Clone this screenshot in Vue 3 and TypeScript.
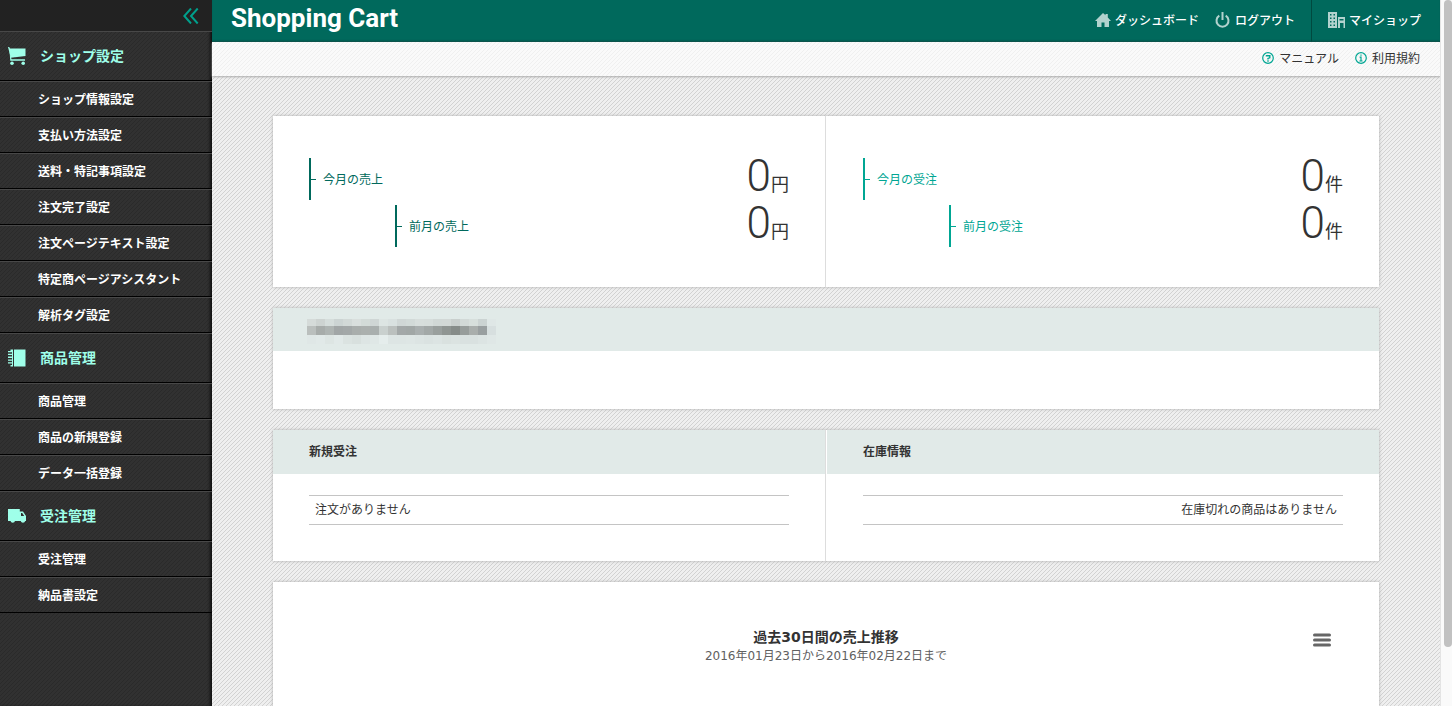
<script setup lang="ts">
interface MenuSection {
  title: string
  icon: 'cart' | 'notebook' | 'truck'
  items: string[]
}

interface StatPanel {
  tone: string
  unit: string
  rows: { label: string; value: number }[]
}

const sections: MenuSection[] = [
  {
    title: 'ショップ設定',
    icon: 'cart',
    items: [
      'ショップ情報設定',
      '支払い方法設定',
      '送料・特記事項設定',
      '注文完了設定',
      '注文ページテキスト設定',
      '特定商ページアシスタント',
      '解析タグ設定',
    ],
  },
  { title: '商品管理', icon: 'notebook', items: ['商品管理', '商品の新規登録', 'データ一括登録'] },
  { title: '受注管理', icon: 'truck', items: ['受注管理', '納品書設定'] },
]

const stats: StatPanel[] = [
  {
    tone: 'sales',
    unit: '円',
    rows: [
      { label: '今月の売上', value: 0 },
      { label: '前月の売上', value: 0 },
    ],
  },
  {
    tone: 'orders',
    unit: '件',
    rows: [
      { label: '今月の受注', value: 0 },
      { label: '前月の受注', value: 0 },
    ],
  },
]

const lists = [
  { title: '新規受注', message: '注文がありません', align: 'start' },
  { title: '在庫情報', message: '在庫切れの商品はありません', align: 'end' },
]

// Tile colours of the masked shop name, row by row
const mask: string[][] = [
  ['d5dbd9', 'cdd3d1', 'd5dddb', 'ccd4d3', 'd2d9d7', 'd9dfdd', 'd3dbd8', 'cfd6d5', 'dde5e3', 'd9e1e0', 'd0d7d6', 'd2dad8', 'd7dedc', 'd6dddb', 'd1d8d6', 'd2d8d6', 'c9cfcd', 'd2d9d7', 'd7dfdc', 'cbd3d2', 'dfe7e6'],
  ['babfbd', 'a7acaa', 'aeb4b2', 'a1a6a6', 'a3a8a8', 'a9aeac', 'abb0ae', 'a9afae', 'c9d0ce', 'bbc0be', 'a3a8a8', 'a1a7a6', 'a9afaf', 'a2a8a7', '999f9d', '8f9592', '868c89', '979d9b', 'a9aeac', '999fa0', 'd7dfdf'],
  ['dfe7e6', 'e1e9e8', 'dde5e3', 'e1e9e8', 'dbe3e1', 'd8e0de', 'dde5e4', 'dfe7e6', 'e5edec', 'dde5e4', 'dde5e4', 'dee6e5', 'dce4e3', 'dae2e1', 'dce4e3', 'd9e1df', 'dbe3e1', 'd9e1e0', 'd9e1e0', 'dce4e3', 'dfe7e6'],
]
</script>

<template>
  <div class="app">
    <aside class="sidebar">
      <div class="sidebar-top">
        <button type="button" class="collapse" aria-label="メニューを閉じる">
          <svg width="16" height="16" viewBox="0 0 16 16" fill="none" stroke="currentColor" stroke-width="2">
            <path d="M8 .5 1.300 8 8 15.500M14.700.5 8 8l6.700 7.500" />
          </svg>
        </button>
      </div>
      <nav>
        <section v-for="section in sections" :key="section.title">
          <h2 class="menu-head">
            <svg v-if="section.icon === 'cart'" width="18" height="18" viewBox="0 0 18 18" fill="currentColor">
              <path d="M0 0h1.200L2 1.500H17.500v7.500L2.800 10.800Z" />
              <path d="M1.300 1.500 3.500 12.300H17v1.400H2.300Z" />
              <circle cx="4" cy="16.200" r="1.800" /><circle cx="15.200" cy="16.200" r="1.800" />
            </svg>
            <svg v-else-if="section.icon === 'notebook'" width="18" height="18" viewBox="0 0 18 18" fill="currentColor">
              <path d="M6 .5h11.500v17H6z" />
              <path d="M2.500.5H5v17H2.500V16H4v-1.500H0v-1.300h4v-1.500H0v-1.300h4V8.900H0V7.600h4V6.100H0V4.800h4V3.300H0V2h2.500z" />
            </svg>
            <svg v-else width="18" height="18" viewBox="0 0 18 18" fill="currentColor">
              <path fill-rule="evenodd" d="M0 2h11.800v2.500H15l3 4.500v5h-.8a2.300 2.300 0 0 1-4.500 0H7a2.300 2.300 0 0 1-4.500 0H0ZM13 6v3h3.200l-2-3Z" />
            </svg>
            <span>{{ section.title }}</span>
          </h2>
          <ul class="menu">
            <li v-for="item in section.items" :key="item"><a href="#">{{ item }}</a></li>
          </ul>
        </section>
      </nav>
    </aside>

    <div class="page">
      <header class="header">
        <h1 class="logo">Shopping Cart</h1>
        <nav class="global">
          <a href="#">
            <svg width="16" height="14" viewBox="0 0 16 14" fill="currentColor">
              <path d="M8 0 10.500 2.300V1h2.300v3.500L16 8h-2v6H9.500V9.500h-3V14H2V8H0Z" />
            </svg>
            ダッシュボード
          </a>
          <a href="#" class="logout">
            <svg width="15" height="16" viewBox="0 0 15 16" fill="none" stroke="currentColor" stroke-width="2">
              <path d="M4.300 3.600a6 6 0 1 0 6.400 0M7.500 0v8" />
            </svg>
            ログアウト
          </a>
          <a href="#" class="myshop">
            <svg width="17" height="16" viewBox="0 0 17 16" fill="currentColor" fill-rule="evenodd">
              <path d="M0 0h9v16H0ZM2 2v1.500h1.500V2Zm3.500 0v1.500H7V2ZM2 5.500V7h1.500V5.500Zm3.500 0V7H7V5.500ZM2 9v1.500h1.500V9Zm3.500 0v1.500H7V9ZM2 12.500V14h1.500v-1.500Zm3.500 0V14H7v-1.500Z" />
              <path d="M10 5h7v11h-1.500v-5H12v5h-2ZM11.500 7v1.500h4V7Z" />
            </svg>
            マイショップ
          </a>
        </nav>
      </header>
      <nav class="subnav">
        <a href="#">
          <svg width="12" height="12" viewBox="0 0 12 12" fill="none" stroke="currentColor" stroke-width="1.200">
            <circle cx="6" cy="6" r="5.300" />
            <path d="M3.800 3.800h4v2L6 6.400v1M6 8.300v1.400" stroke-width="1.400" />
          </svg>
          マニュアル
        </a>
        <a href="#">
          <svg width="12" height="12" viewBox="0 0 12 12" fill="none" stroke="currentColor" stroke-width="1.200">
            <circle cx="6" cy="6" r="5.300" />
            <path d="M6 2.500v1.300M4.600 5.200H6V9M4.400 9h3.200" />
          </svg>
          利用規約
        </a>
      </nav>

      <main class="content">
        <section class="card split">
          <div v-for="panel in stats" :key="panel.tone" class="column stats" :class="panel.tone">
            <div v-for="row in panel.rows" :key="row.label" class="stat">
              <span class="stat-label">{{ row.label }}</span>
              <span class="stat-value"><b>{{ row.value }}</b>{{ panel.unit }}</span>
            </div>
          </div>
        </section>

        <section class="card">
          <div class="card-head masked">
            <div class="mask">
              <template v-for="(line, y) in mask" :key="y">
                <i v-for="(color, x) in line" :key="x" :style="{ background: '#' + color }"></i>
              </template>
            </div>
          </div>
          <div class="notice"></div>
        </section>

        <section class="card split">
          <div v-for="list in lists" :key="list.title" class="column">
            <h3 class="card-head">{{ list.title }}</h3>
            <div class="list">
              <table :aria-label="list.title">
                <tbody>
                  <tr><td :class="list.align">{{ list.message }}</td></tr>
                </tbody>
              </table>
            </div>
          </div>
        </section>

        <section class="card chart">
          <h3>過去30日間の売上推移</h3>
          <p>2016年01月23日から2016年02月22日まで</p>
          <button type="button" class="chart-menu" aria-label="グラフメニュー">
            <svg width="18" height="14" viewBox="0 0 18 14" stroke="currentColor" stroke-width="3" stroke-linecap="round">
              <path d="M1.500 2h15M1.500 7h15M1.500 12h15" />
            </svg>
          </button>
        </section>
      </main>
    </div>
    <div class="scroll-track" aria-hidden="true"><div class="scroll-thumb"></div></div>
  </div>
</template>

<style>
body {
  margin: 0;
}
</style>

<style scoped>
.app {
  display: flex;
  height: 100vh;
  overflow: hidden;
  font: 12px/18px "Noto Sans CJK JP", sans-serif;
  color: #333;
}
h1, h2, h3, p, ul {
  margin: 0;
  padding: 0;
}
a {
  color: inherit;
  text-decoration: none;
}
button {
  display: flex;
  padding: 0;
  border: 0;
  background: none;
  color: inherit;
}
svg {
  flex: none;
}

.sidebar {
  flex: none;
  width: 212px;
  background-color: #313131;
  background-image: linear-gradient(135deg, transparent 44%, #2a2a2a 44% 56%, transparent 56%);
  background-size: 4px 4px;
  box-shadow: inset -3px 0 3px -1px #111;
  font-weight: 700;
}
.sidebar-top {
  display: flex;
  justify-content: flex-end;
  align-items: center;
  height: 31px;
  padding-right: 13px;
  background: #222;
  color: #00a08c;
}
.menu-head {
  display: flex;
  align-items: center;
  gap: 14px;
  box-sizing: border-box;
  height: 50px;
  padding-left: 8px;
  border-top: 1px solid #484848;
  border-bottom: 1px solid #000;
  color: #9fffe9;
  font-size: 14px;
}
.menu-head span {
  padding-bottom: 2px;
}
.menu {
  list-style: none;
}
.menu a {
  display: block;
  padding: 8px 0 8px 38px;
  border-top: 1px solid #484848;
  border-bottom: 1px solid #000;
  color: #fff;
}

.page {
  display: flex;
  flex: 1;
  flex-direction: column;
  min-width: 0;
  background-color: #efefef;
  background-image: linear-gradient(135deg, transparent 44%, #d2d2d2 44% 56%, transparent 56%);
  background-size: 4px 4px;
}
.header {
  display: flex;
  flex: none;
  justify-content: space-between;
  height: 42px;
  padding-left: 19px;
  background: #00695c;
  box-shadow: inset 0 -2px 2px -1px #00463d;
  color: #fff;
}
.logo {
  font: 700 26px/37px Roboto, sans-serif;
}
.global {
  display: flex;
  font-weight: 500;
}
.global a {
  display: flex;
  align-items: center;
  gap: 4px;
  padding-bottom: 2px;
}
.global svg {
  color: #b2d2ce;
}
.global .logout {
  gap: 5px;
  padding: 0 16px 2px;
}
.global .myshop {
  padding: 0 19px 2px 16px;
  border-left: 1px solid #00493f;
}
.subnav {
  display: flex;
  flex: none;
  justify-content: flex-end;
  align-items: center;
  gap: 16px;
  box-sizing: border-box;
  height: 34px;
  padding: 0 20px 2px;
  background-color: #fafafa;
  background-image: linear-gradient(135deg, transparent 44%, #f0f0f0 44% 56%, transparent 56%);
  background-size: 4px 4px;
  box-shadow: 0 1px 2px #aaa;
}
.subnav a {
  display: flex;
  align-items: center;
  gap: 5px;
}
.subnav svg {
  color: #00a693;
}

.content {
  display: flex;
  flex-direction: column;
  gap: 21px;
  padding: 40px 61px;
}
.card {
  position: relative;
  flex: none;
  background: #fff;
  box-shadow: 0 0 3px #aaa;
}
.split {
  display: grid;
  grid-template-columns: 1fr 1fr;
}
.column:first-child {
  border-right: 1px solid #ddd;
}
.column:last-child {
  border-left: 1px solid #fff;
}
.stats {
  display: flex;
  flex-direction: column;
  gap: 5px;
  padding: 42px 36px 40px;
}
.stat {
  display: flex;
  justify-content: space-between;
  align-items: center;
  height: 42px;
}
.stat-label {
  display: flex;
  align-items: center;
  gap: 7px;
  height: 42px;
  border-left: 2px solid currentColor;
}
.stat-label::before {
  content: "";
  width: 5px;
  height: 1px;
  background: currentColor;
}
.stat:last-child .stat-label {
  margin-left: 86px;
}
.sales .stat-label {
  color: #00695c;
}
.orders .stat-label {
  color: #00a693;
}
.stat-value {
  font-size: 18px;
  line-height: 36px;
}
.stat-value b {
  font: 300 44px/36px Roboto, sans-serif;
}
.card-head {
  padding: 12px 36px 14px;
  background: #e1eae8;
  font-size: 12px;
  line-height: 18px;
}
.card-head.masked {
  padding: 11px 34px 7px;
}
.mask {
  display: grid;
  grid-template-columns: repeat(21, 9px);
  grid-template-rows: 7px 9px 9px;
}
.notice {
  min-height: 58px;
}
.list {
  padding: 21px 36px 36px;
}
.list table {
  width: 100%;
  border-collapse: collapse;
}
.list td {
  padding: 4px 6px 6px;
  border: solid #c4c4c4;
  border-width: 1px 0;
  text-align: left;
}
.list td.end {
  text-align: right;
}
.chart {
  min-height: 400px;
  padding-top: 45px;
  box-sizing: border-box;
  text-align: center;
  font-family: "DejaVu Sans", "Noto Sans CJK JP", sans-serif;
}
.chart h3 {
  font-size: 14px;
  line-height: 20px;
}
.chart p {
  color: #606060;
}
.chart-menu {
  position: absolute;
  top: 51px;
  right: 48px;
  color: #666;
}

.scroll-track {
  flex: none;
  width: 8px;
  padding-left: 3px;
  border-left: 1px solid #e4e4e4;
  background: #fafafa;
}
.scroll-thumb {
  height: calc(100% - 59px);
  border-radius: 4px;
  background: #c1c1c1;
}
</style>
